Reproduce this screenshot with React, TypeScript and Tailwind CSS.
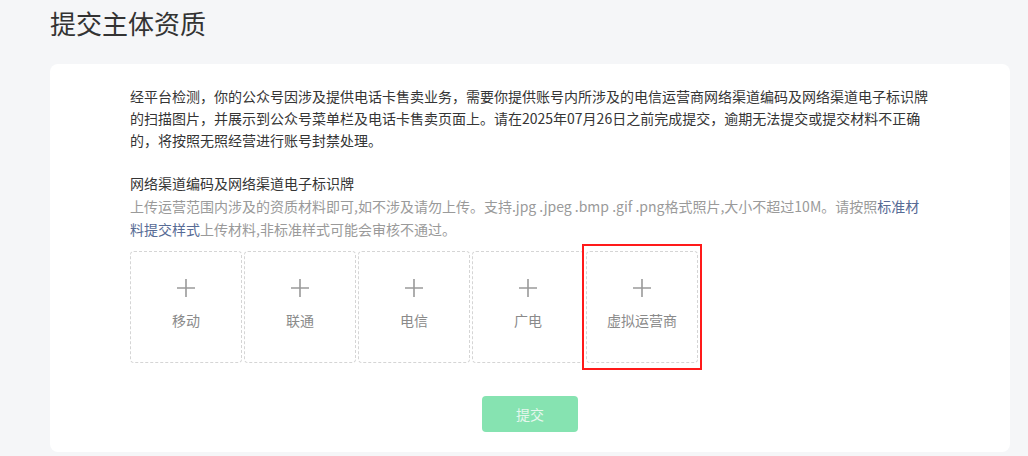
import React from 'react';

const carriers = ['移动', '联通', '电信', '广电', '虚拟运营商'];

const UploadBox: React.FC<{ label: string; highlighted?: boolean }> = ({ label, highlighted }) => (
  <div className="relative">
    <div className="w-[112px] h-[112px] rounded-[4px] border border-dashed border-[#d5d5d5] flex flex-col items-center justify-center bg-white">
      <svg width="18" height="18" viewBox="0 0 18 18" className="mt-[-6px]">
        <path d="M9 0v18M0 9h18" stroke="#9a9a9a" strokeWidth="1.6" fill="none" />
      </svg>
      <span className="mt-[13px] text-[14px] leading-[20px] text-[#8a8a8a]">{label}</span>
    </div>
    {highlighted && (
      <div className="absolute left-[-4px] right-[-4px] top-[-7px] bottom-[-7px] border-2 border-[#ff1a1a] pointer-events-none" />
    )}
  </div>
);

export default function App() {
  return (
    <div
      className="min-h-[456px] bg-[#f5f6f8] px-[50px] pt-[7px] pb-[4px]"
      style={{ fontFamily: '"Noto Sans CJK SC", "Noto Sans", sans-serif' }}
    >
      {/* 标题 */}
      <h1 className="text-[26px] leading-[32px] text-[#333333] font-normal">提交主体资质</h1>

      {/* 卡片 */}
      <div className="mt-[25px] w-[960px] bg-white rounded-[8px] pt-[21px] pb-[20px]">
        <div className="w-[800px] mx-auto">
          <p className="text-[14px] leading-[22px] text-[#353535]">
            经平台检测，你的公众号因涉及提供电话卡售卖业务，需要你提供账号内所涉及的电信运营商网络渠道编码及网络渠道电子标识牌的扫描图片，并展示到公众号菜单栏及电话卡售卖页面上。请在2025年07月26日之前完成提交，逾期无法提交或提交材料不正确的，将按照无照经营进行账号封禁处理。
          </p>

          <h2 className="mt-[21px] text-[14px] leading-[22px] text-[#353535] font-normal">
            网络渠道编码及网络渠道电子标识牌
          </h2>
          <p className="mt-[1px] text-[14px] leading-[23px] text-[#9a9a9a]">
            上传运营范围内涉及的资质材料即可,如不涉及请勿上传。支持.jpg .jpeg .bmp .gif .png格式照片,大小不超过10M。请按照
            <a className="text-[#576b95]">标准材料提交样式</a>
            上传材料,非标准样式可能会审核不通过。
          </p>

          <div className="mt-[10px] flex gap-[2px]">
            {carriers.map((c, i) => (
              <UploadBox key={c} label={c} highlighted={i === carriers.length - 1} />
            ))}
          </div>
        </div>

        {/* 提交按钮 */}
        <div className="mt-[33px] flex justify-center">
          <button
            type="button"
            disabled
            className="w-[96px] h-[36px] rounded-[4px] bg-[#86e3b1] text-[14px] text-[#e6f7ee]"
          >
            提交
          </button>
        </div>
      </div>
    </div>
  );
}
